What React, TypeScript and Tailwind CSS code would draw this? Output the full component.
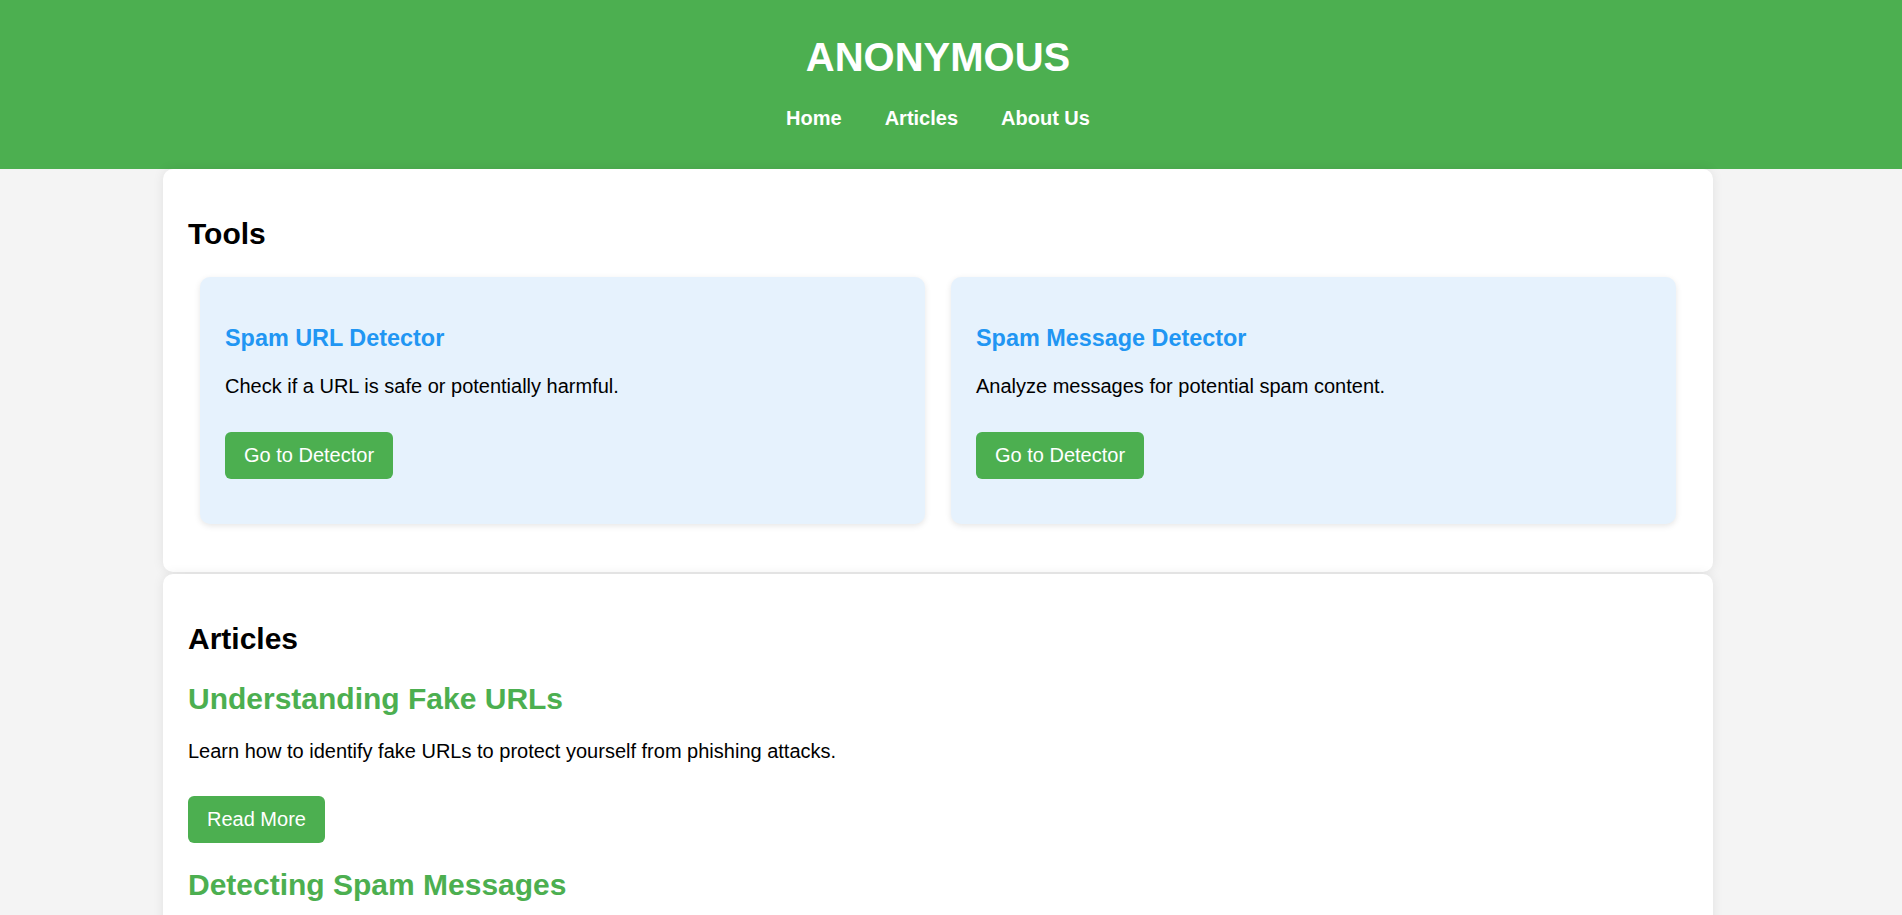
import React from "react";

interface Tool {
  title: string;
  text: string;
}

interface Article {
  title: string;
  text: string;
}

const tools: Tool[] = [
  { title: "Spam URL Detector", text: "Check if a URL is safe or potentially harmful." },
  { title: "Spam Message Detector", text: "Analyze messages for potential spam content." },
];

const articles: Article[] = [
  {
    title: "Understanding Fake URLs",
    text: "Learn how to identify fake URLs to protect yourself from phishing attacks.",
  },
  {
    title: "Detecting Spam Messages",
    text: "Discover the common signs of spam messages and how to avoid falling for them.",
  },
  {
    title: "Staying Safe Online",
    text: "Simple habits that keep your accounts and personal data secure.",
  },
];

function GreenButton({ label }: { label: string }) {
  return (
    <button className="h-[47px] px-[19px] rounded-[6px] bg-[#4CAF50] text-white text-[20px] leading-[23px]">
      {label}
    </button>
  );
}

export default function App() {
  return (
    <div
      className="min-h-screen bg-[#f4f4f4] text-black"
      style={{ fontFamily: '"Liberation Sans", Arial, sans-serif' }}
    >
      <header className="bg-[#4CAF50] text-white pt-[34px] pb-[39px]">
        <div className="w-[1876px] flex flex-col items-center">
          <h1 className="text-[40px] leading-[46px] font-bold">ANONYMOUS</h1>
          <nav className="mt-[27px] flex gap-[43px] text-[20px] leading-[23px] font-bold">
            <a href="#">Home</a>
            <a href="#">Articles</a>
            <a href="#">About Us</a>
          </nav>
        </div>
      </header>

      <main className="ml-[163px] w-[1550px] flex flex-col gap-[2px] pb-[25px]">
        <section className="bg-white rounded-[10px] shadow-[0_0_12px_rgba(0,0,0,0.08)] px-[25px] pt-[48px] pb-[48px] flex flex-col">
          <h2 className="text-[30px] leading-[34px] font-bold">Tools</h2>
          <div className="mt-[26px] px-[12px] flex gap-[26px]">
            {tools.map((t) => (
              <div
                key={t.title}
                className="flex-1 bg-[#e6f2fd] rounded-[10px] shadow-[0_2px_6px_rgba(0,0,0,0.1)] px-[25px] pt-[48px] pb-[45px] flex flex-col items-start"
              >
                <h3 className="text-[23.4px] leading-[27px] font-bold text-[#2196F3]">{t.title}</h3>
                <p className="mt-[23px] text-[20px] leading-[23px]">{t.text}</p>
                <div className="mt-[34px]">
                  <GreenButton label="Go to Detector" />
                </div>
              </div>
            ))}
          </div>
        </section>

        <section className="bg-white rounded-[10px] shadow-[0_0_12px_rgba(0,0,0,0.08)] px-[25px] pt-[48px] pb-[40px] flex flex-col">
          <h2 className="text-[30px] leading-[34px] font-bold">Articles</h2>
          {articles.map((a, i) => (
            <div key={a.title} className={i === 0 ? "mt-[26px] flex flex-col items-start" : "mt-[25px] flex flex-col items-start"}>
              <h2 className="text-[30px] leading-[34px] font-bold text-[#4CAF50]">{a.title}</h2>
              <p className="mt-[24px] text-[20px] leading-[23px]">{a.text}</p>
              <div className="mt-[33px]">
                <GreenButton label="Read More" />
              </div>
            </div>
          ))}
        </section>
      </main>
    </div>
  );
}
